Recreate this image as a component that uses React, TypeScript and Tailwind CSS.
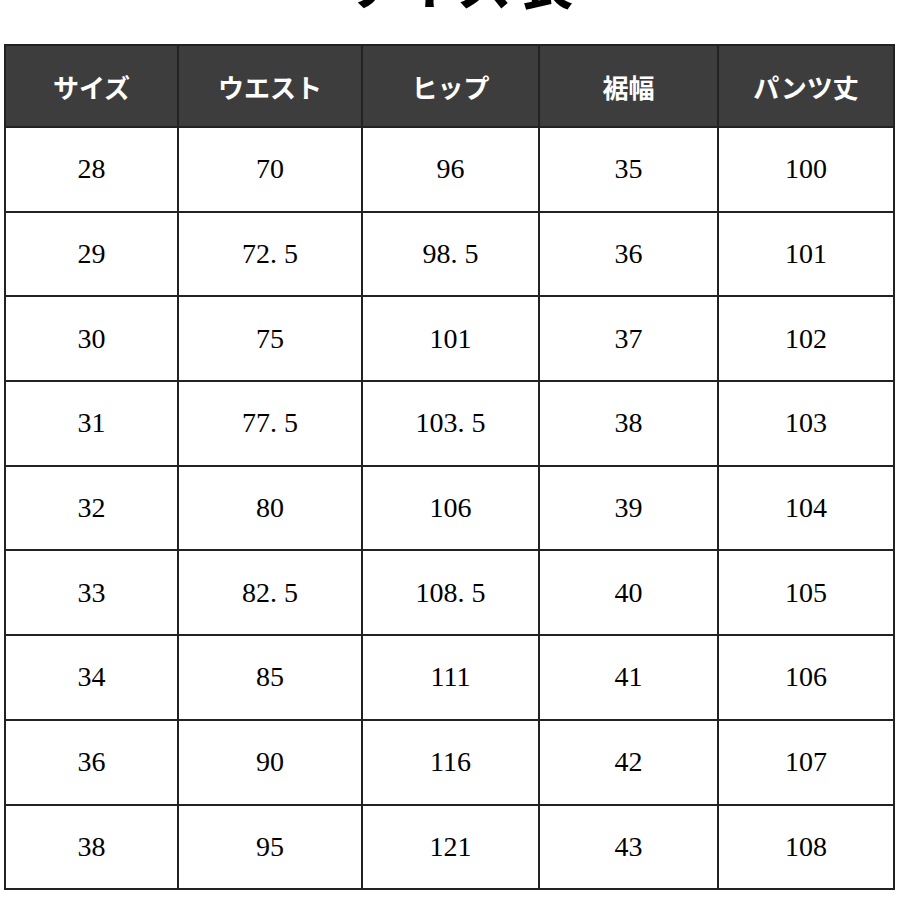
const headers = ['サイズ', 'ウエスト', 'ヒップ', '裾幅', 'パンツ丈'];

const rows = [
  ['28', '70', '96', '35', '100'],
  ['29', '72.5', '98.5', '36', '101'],
  ['30', '75', '101', '37', '102'],
  ['31', '77.5', '103.5', '38', '103'],
  ['32', '80', '106', '39', '104'],
  ['33', '82.5', '108.5', '40', '105'],
  ['34', '85', '111', '41', '106'],
  ['36', '90', '116', '42', '107'],
  ['38', '95', '121', '43', '108'],
];

const cols = 'grid grid-cols-[173px_184px_177px_179px_1fr]';

// the period sits in a full digit cell, like a mincho face
function Num({ value }: { value: string }) {
  const [whole, frac] = value.split('.');
  return (
    <span>
      {whole}
      {frac !== undefined && (
        <>
          <span className="inline-block w-[0.5em]">.</span>
          {frac}
        </>
      )}
    </span>
  );
}

export default function App() {
  return (
    <div className="w-[900px] h-[900px] overflow-hidden bg-white">
      <h1
        className="-mt-[48px] h-[56px] pl-[16px] text-center text-[56px] leading-[56px] font-bold tracking-[4px] text-black"
        style={{ fontFamily: '"Noto Sans CJK JP", sans-serif' }}
      >
        サイズ表
      </h1>

      <div className="mt-[36px] ml-[4px] w-[891px] border-2 border-[#222]">
        <div className={`${cols} h-[80px] bg-[#3d3d3d]`}>
          {headers.map((h, i) => (
            <div
              key={h}
              className={`flex items-center justify-center text-[26px] font-bold text-white ${i < 4 ? 'border-r-2 border-[#222]' : ''}`}
              style={{ fontFamily: '"Noto Sans CJK JP", sans-serif' }}
            >
              {h}
            </div>
          ))}
        </div>

        {rows.map((r, ri) => (
          <div key={ri} className={`${cols} h-[84.7px] border-t-2 border-[#222]`}>
            {r.map((v, ci) => (
              <div
                key={ci}
                className={`flex items-center justify-center text-[28px] text-black ${ci < 4 ? 'border-r-2 border-[#222]' : ''}`}
                style={{ fontFamily: '"Liberation Serif", serif' }}
              >
                <Num value={v} />
              </div>
            ))}
          </div>
        ))}
      </div>
    </div>
  );
}
